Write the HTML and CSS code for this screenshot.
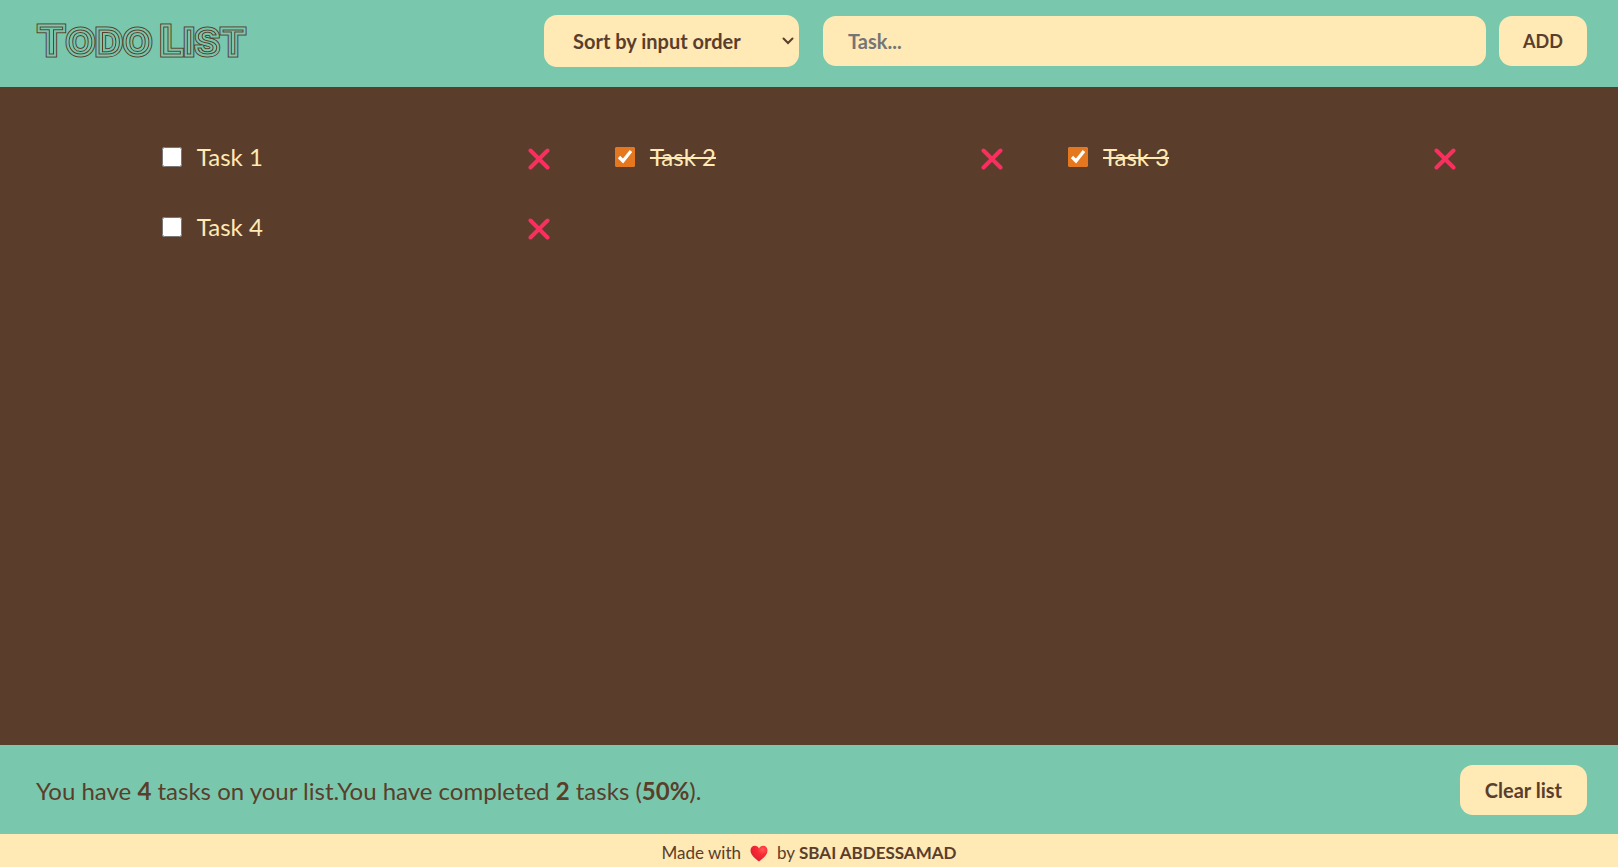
FILE: index.html
```html
<!DOCTYPE html>
<html lang="en">
<head>
<meta charset="utf-8">
<meta name="viewport" content="width=device-width, initial-scale=1">
<title>Todo List</title>
<link rel="stylesheet" href="styles.css">
</head>
<body>
<div class="app">
  <header class="header">
    <h1 class="logo">
      <svg class="logo-art" width="230" height="52" role="img" aria-label="Todo List">
        <defs>
          <text id="logo-text" x="0" y="41"><tspan class="logo-cap">T</tspan><tspan>ODO </tspan><tspan class="logo-cap">L</tspan><tspan>IST</tspan></text>
          <clipPath id="logo-clip"><use href="#logo-text"/></clipPath>
        </defs>
        <use class="line line-outer" href="#logo-text"/>
        <use class="line line-rim" href="#logo-text"/>
        <g clip-path="url(#logo-clip)">
          <use href="#logo-text"/>
          <use class="line line-inner" href="#logo-text"/>
          <use class="line line-gap" href="#logo-text"/>
        </g>
      </svg>
    </h1>
    <form class="controls">
      <select class="control sort" aria-label="Sort tasks">
        <option>Sort by input order</option>
        <option>Sort by description</option>
        <option>Sort by status</option>
      </select>
      <div class="add">
        <input class="control task-input" type="text" placeholder="Task..." aria-label="Task">
        <button class="control submit" type="button">ADD</button>
      </div>
    </form>
  </header>

  <main class="main">
    <ul class="tasks">
      <li class="task"><input class="check" type="checkbox" id="t1"><label class="name" for="t1">Task 1</label><button class="remove" type="button" aria-label="Delete Task 1"><svg width="22" height="22" viewBox="0 0 22 22"><path d="M2.500 2.500 19.500 19.500M19.500 2.500 2.500 19.500"/></svg></button></li>
      <li class="task"><input class="check" type="checkbox" id="t2" checked><label class="name" for="t2">Task 2</label><button class="remove" type="button" aria-label="Delete Task 2"><svg width="22" height="22" viewBox="0 0 22 22"><path d="M2.500 2.500 19.500 19.500M19.500 2.500 2.500 19.500"/></svg></button></li>
      <li class="task"><input class="check" type="checkbox" id="t3" checked><label class="name" for="t3">Task 3</label><button class="remove" type="button" aria-label="Delete Task 3"><svg width="22" height="22" viewBox="0 0 22 22"><path d="M2.500 2.500 19.500 19.500M19.500 2.500 2.500 19.500"/></svg></button></li>
      <li class="task"><input class="check" type="checkbox" id="t4"><label class="name" for="t4">Task 4</label><button class="remove" type="button" aria-label="Delete Task 4"><svg width="22" height="22" viewBox="0 0 22 22"><path d="M2.500 2.500 19.500 19.500M19.500 2.500 2.500 19.500"/></svg></button></li>
    </ul>
  </main>

  <section class="stats">
    <p class="summary">You have <strong>4</strong> tasks on your list.You have completed <strong>2</strong> tasks (<strong>50%</strong>).</p>
    <button class="control clear" type="button">Clear list</button>
  </section>

  <footer class="credit">
    <span>Made with</span>
    <svg class="heart" width="18" height="17" viewBox="0 0 18 17" aria-label="love" role="img">
      <defs><radialGradient id="heart-fill" cx=".72" cy=".25" r=".8"><stop offset="0" stop-color="#ff5a5a"/><stop offset=".4" stop-color="#fa2a32"/><stop offset="1" stop-color="#dc1f3a"/></radialGradient></defs>
      <path fill="url(#heart-fill)" d="M9 16.500C5.500 14 .5 10 .5 5.500.5 2.500 2.500.8 4.800.8 6.700.8 8.200 1.800 9 3.500 9.800 1.800 11.300.8 13.200.8c2.300 0 4.300 1.700 4.300 4.700C17.500 10 12.500 14 9 16.500Z"/>
    </svg>
    <span>by <strong>SBAI ABDESSAMAD</strong></span>
  </footer>
</div>
</body>
</html>
```
FILE: styles.css
```css
:root {
  --green: #79c8ae;
  --brown: #5a3e2b;
  --cream: #ffe9b5;
}

* {
  box-sizing: border-box;
}

body {
  margin: 0;
  color: var(--brown);
  font-family: Lato, "Open Sans", sans-serif;
}

.app {
  min-height: 100vh;
  display: flex;
  flex-direction: column;
}

.header {
  display: flex;
  align-items: center;
  justify-content: space-between;
  padding: 15px 31px 20px 37px;
  background: var(--green);
}

.logo {
  margin: 0;
  display: flex;
}

.logo-art {
  overflow: visible;
  fill: var(--green);
  font-family: Inter, sans-serif;
  font-size: 38px;
  font-weight: 900;
}

.logo-cap {
  font-size: 42px;
}

.line {
  fill: none;
}

.line-outer {
  stroke: var(--brown);
  stroke-width: 3px;
}

.line-rim {
  stroke: var(--green);
  stroke-width: 1px;
}

.line-inner {
  stroke: var(--brown);
  stroke-width: 5px;
}

.line-gap {
  stroke: var(--green);
  stroke-width: 3px;
}

.controls {
  flex: 0 1 1043px;
  display: flex;
  align-items: center;
  gap: 24px;
}

.control {
  height: 50px;
  padding: 0 25px;
  border: 0;
  border-radius: 13px;
  background-color: var(--cream);
  color: var(--brown);
  font: 700 20px Lato, "Open Sans", sans-serif;
}

.sort {
  width: 255px;
  height: 52px;
  padding: 0 29px;
  appearance: none;
  background-image: url("data:image/svg+xml,%3Csvg xmlns='http://www.w3.org/2000/svg' width='12' height='8'%3E%3Cpath d='M1.500 1.500 6 6 10.500 1.500' fill='none' stroke='%235a3e2b' stroke-width='2' stroke-linecap='round'/%3E%3C/svg%3E");
  background-repeat: no-repeat;
  background-position: right 5px center;
}

.add {
  flex: 1;
  display: flex;
  gap: 13px;
}

.task-input {
  flex: 1;
  min-width: 0;
}

.task-input::placeholder {
  color: #757575;
}

.submit {
  padding: 0 24px;
  font-size: 18px;
}

.main {
  flex: 1;
  background: var(--brown);
  color: var(--cream);
}

.tasks {
  width: 80%;
  margin: 0 auto;
  padding: 55px 0;
  display: grid;
  grid-template-columns: repeat(3, 1fr);
  gap: 40px 65px;
  list-style: none;
}

.task {
  display: flex;
  align-items: center;
  height: 30px;
}

.check {
  width: 20px;
  height: 20px;
  margin: 0 15px 0 0;
  accent-color: #e5771f;
}

.name {
  flex: 1;
  font-size: 24px;
  line-height: 30px;
}

.check:checked + .name {
  text-decoration: line-through;
  text-decoration-thickness: 2px;
  flex: none;
  margin-right: auto;
}

.remove {
  display: flex;
  padding: 3px 0 0;
  border: 0;
  background: none;
}

.remove path {
  fill: none;
  stroke: #f92f60;
  stroke-width: 4;
  stroke-linecap: round;
}

.stats {
  display: flex;
  align-items: center;
  justify-content: space-between;
  padding: 20px 31px 19px 36px;
  background: var(--green);
}

.summary {
  margin: 0;
  font-size: 24px;
}

.credit {
  display: flex;
  align-items: center;
  justify-content: center;
  gap: 9px;
  padding: 7px 0 2px;
  background: var(--cream);
  font-size: 17px;
  line-height: 24px;
}
```
